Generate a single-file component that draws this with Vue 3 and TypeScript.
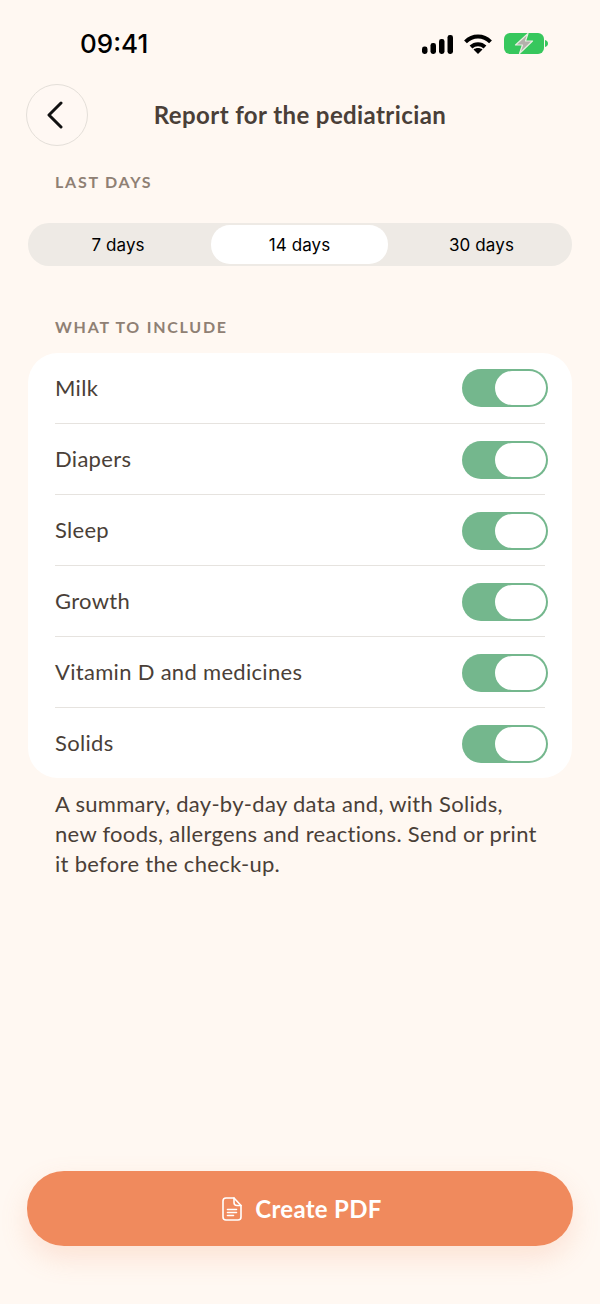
<script setup lang="ts">
const ranges: { label: string; active: boolean }[] = [
  { label: '7 days', active: false },
  { label: '14 days', active: true },
  { label: '30 days', active: false },
]
const items: string[] = ['Milk', 'Diapers', 'Sleep', 'Growth', 'Vitamin D and medicines', 'Solids']
</script>

<template>
  <div class="screen">
    <div class="status">
      <span class="time">09:41</span>
      <div class="status-icons">
        <svg class="signal" width="31" height="19" viewBox="0 0 31 19" fill="#000">
          <rect x="0" y="11.500" width="5.500" height="7.500" rx="2.400" />
          <rect x="8.500" y="8" width="5.500" height="11" rx="2.400" />
          <rect x="17" y="4" width="5.500" height="15" rx="2.400" />
          <rect x="25.500" y="0" width="5.500" height="19" rx="2.400" />
        </svg>
        <svg class="wifi" width="28" height="20" viewBox="0 0 28 20" fill="none" stroke="#000" stroke-width="4">
          <path d="M1.500 7.800C8.600 .8 19.400 .8 26.500 7.800" />
          <path d="M7 13C11 9.200 17 9.200 21 13" />
          <path d="M14 20l-4.500-4.500c2.400-2 6.600-2 9 0z" fill="#000" stroke="none" />
        </svg>
        <svg class="battery" width="44" height="21" viewBox="0 0 44 21">
          <rect x="0" y="0" width="40" height="21" rx="6" fill="#37c75d" />
          <path d="M41 7c1.800.4 3 1.700 3 3.500s-1.200 3.100-3 3.500z" fill="#37c75d" />
          <path d="M24 .5L11.500 12h7L15.500 20.500 28.500 8h-7z" fill="#b3b1ab" stroke="#e6f0e0" stroke-width="1.200" stroke-linejoin="round" />
        </svg>
      </div>
    </div>

    <header class="header">
      <button class="back" type="button" aria-label="Back">
        <svg width="18" height="28" viewBox="0 0 18 28" fill="none" stroke="#111" stroke-width="3" stroke-linecap="round" stroke-linejoin="round">
          <path d="M15 2L3 14l12 12" />
        </svg>
      </button>
      <h1 class="title">Report for the pediatrician</h1>
    </header>

    <div class="label label-days">LAST DAYS</div>
    <div class="segments">
      <div v-for="r in ranges" :key="r.label" class="segment" :class="{ active: r.active }">{{ r.label }}</div>
    </div>

    <div class="label label-include">WHAT TO INCLUDE</div>
    <div class="card">
      <div v-for="item in items" :key="item" class="row">
        <span class="row-text">{{ item }}</span>
        <span class="toggle"><span class="knob"></span></span>
      </div>
    </div>

    <p class="note">A summary, day-by-day data and, with Solids, new foods, allergens and reactions. Send or print it before the check-up.</p>

    <button class="cta" type="button">
      <svg width="20" height="24" viewBox="0 0 20 24" fill="none" stroke="#fff" stroke-width="1.600" stroke-linecap="round" stroke-linejoin="round">
        <path d="M4 1h8l7 7.500V20c0 1.700-1.300 3-3 3H4c-1.700 0-3-1.300-3-3V4c0-1.700 1.300-3 3-3z" />
        <path d="M12 1v4.500c0 1.700 1.300 3 3 3h4" />
        <path d="M5.500 12.500h9M5.500 15.500h9M5.500 18.500h6" />
      </svg>
      <span>Create PDF</span>
    </button>
  </div>
</template>

<style>
html, body { margin: 0; background: #fff8f2; }
</style>

<style scoped>
.screen {
  box-sizing: border-box;
  width: 600px;
  height: 1304px;
  display: flex;
  flex-direction: column;
  background: #fff8f2;
  font-family: "Lato", "Noto Sans", sans-serif;
  color: #4a3f38;
  padding-bottom: 58px;
}
.status {
  height: 84px;
  box-sizing: border-box;
  padding: 28px 52px 0 80px;
  display: flex;
  justify-content: space-between;
  align-items: flex-start;
}
.time {
  font-family: "Inter", sans-serif;
  font-size: 26px;
  font-weight: 500;
  line-height: 32px;
  color: #000;
}
.status-icons {
  display: flex;
  align-items: flex-start;
  margin-top: 5px;
}
.signal { margin-top: 2px; }
.wifi { margin: 1px 12px 0 11px; }
.header {
  position: relative;
  height: 62px;
  display: flex;
  align-items: center;
  justify-content: center;
}
.back {
  position: absolute;
  left: 26px;
  top: 0;
  width: 62px;
  height: 62px;
  box-sizing: border-box;
  border-radius: 50%;
  border: 1px solid #e4dfd9;
  background: #fff8f3;
  padding: 0 4px 0 0;
  display: flex;
  align-items: center;
  justify-content: center;
}
.title {
  margin: 0;
  font-size: 24px;
  font-weight: 700;
  letter-spacing: 0.4px;
  color: #4a3f38;
  line-height: 62px;
}
.label {
  font-size: 16px;
  font-weight: 700;
  letter-spacing: 1.750px;
  color: #8f8074;
  line-height: 20px;
  padding-left: 55px;
}
.label-days { margin-top: 26px; }
.label-include { margin-top: 51px; }
.segments {
  margin: 31px 28px 0;
  height: 43px;
  box-sizing: border-box;
  padding: 2px 3px;
  border-radius: 21px;
  background: #eeeae5;
  display: grid;
  grid-template-columns: 174px 177px 1fr;
  gap: 6px;
}
.segment {
  display: flex;
  align-items: center;
  justify-content: center;
  font-family: "Inter", sans-serif;
  font-size: 17px;
  letter-spacing: 0.1px;
  color: #000;
  border-radius: 19px;
}
.segment.active { background: #fff; }
.card {
  margin: 16px 28px 0;
  background: #fff;
  border-radius: 30px;
  padding: 0 27px;
}
.row {
  height: 70px;
  display: flex;
  align-items: center;
  justify-content: space-between;
  border-bottom: 1px solid #e6e3df;
}
.row:last-child { border-bottom: none; }
.row-text {
  font-size: 22px;
  letter-spacing: 0.3px;
  padding-bottom: 2px;
  color: #4a3f38;
}
.toggle {
  box-sizing: border-box;
  width: 86px;
  height: 38px;
  margin-right: -3px;
  border-radius: 19px;
  background: #74b78d;
  padding: 2px 2px 2px 33px;
  display: flex;
}
.row + .row .toggle { margin-top: 2px; }
.knob {
  flex: 1;
  border-radius: 17px;
  background: #fff;
}
.note {
  margin: 11px 55px 0;
  font-size: 22px;
  letter-spacing: 0.3px;
  line-height: 30px;
  color: #4a3f38;
}
.cta {
  margin: auto 27px 0;
  height: 75px;
  border: none;
  border-radius: 37px;
  background: #f08a5d;
  box-shadow: 0 12px 28px rgba(240, 138, 93, 0.2);
  color: #fff;
  font-family: inherit;
  font-size: 24px;
  font-weight: 700;
  letter-spacing: 0.3px;
  padding: 0 0 0 4px;
  display: flex;
  align-items: center;
  justify-content: center;
  gap: 13px;
}
</style>
